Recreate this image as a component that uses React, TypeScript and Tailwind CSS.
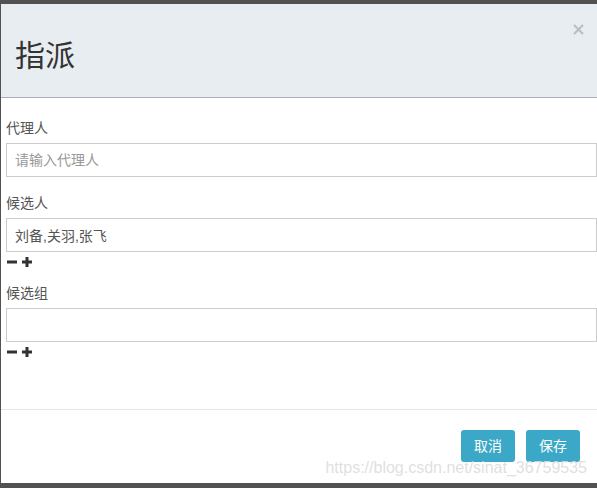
import type { ReactNode } from 'react';

// 指派 dialog — bootstrap-style modal, cropped at the window edges.

const CJK = '"Liberation Sans", "Noto Sans CJK SC", sans-serif';

function MinusPlus(): JSX.Element {
  return (
    <div className="flex h-[18px] items-center gap-[5px] pl-[1px] pt-[1px]">
      <svg width="10" height="10" viewBox="0 0 10 10" aria-hidden>
        <rect x="0" y="3.5" width="10" height="3" fill="#333" />
      </svg>
      <svg width="10" height="10" viewBox="0 0 10 10" aria-hidden>
        <rect x="0" y="3.5" width="10" height="3" fill="#333" />
        <rect x="3.5" y="0" width="3" height="10" fill="#333" />
      </svg>
    </div>
  );
}

function Field({ label, children }: { label: string; children: ReactNode }): JSX.Element {
  return (
    <div>
      <label className="mb-[5px] block h-[20px] text-[14px] leading-[20px] text-[#555]">{label}</label>
      {children}
    </div>
  );
}

function TextBox({ value, placeholder }: { value?: string; placeholder?: string }): JSX.Element {
  return (
    <input
      readOnly
      defaultValue={value}
      placeholder={placeholder}
      className="block h-[34px] w-full border border-[#cccccc] bg-white px-[8px] text-[14px] text-[#555] outline-none placeholder:text-[#999]"
      style={{ fontFamily: CJK }}
    />
  );
}

export default function App(): JSX.Element {
  return (
    <div
      className="relative h-[488px] w-[597px] overflow-hidden bg-[#525252] pl-[1px] pt-[4px]"
      style={{ fontFamily: CJK }}
    >
      <div className="flex h-[479px] w-[596px] flex-col bg-white">
        {/* header */}
        <div className="flex h-[94px] shrink-0 items-start justify-between border-b border-[#a9aeb8] bg-[#e8edf1]">
          <h4 className="pl-[14px] pt-[34px] text-[30px] leading-[36px] text-[#333]">指派</h4>
          <button className="mr-[13px] mt-[20px] p-[0px]">
            <svg width="11" height="11" viewBox="0 0 11 11" aria-hidden>
              <path d="M1 1 L10 10 M10 1 L1 10" stroke="#bcbcbc" strokeWidth="2" />
            </svg>
          </button>
        </div>

        {/* body */}
        <div className="flex flex-1 flex-col pl-[5px] pt-[20px]">
          <Field label="代理人">
            <TextBox placeholder="请输入代理人" />
          </Field>
          <div className="mt-[16px]">
            <Field label="候选人">
              <TextBox value="刘备,关羽,张飞" />
            </Field>
            <MinusPlus />
          </div>
          <div className="mt-[13px]">
            <Field label="候选组">
              <TextBox />
            </Field>
            <MinusPlus />
          </div>
        </div>

        {/* footer */}
        <div className="flex h-[74px] shrink-0 items-start justify-end gap-[11px] border-t border-[#e5e5e5] pr-[17px] pt-[20px]">
          <button className="h-[32px] w-[54px] rounded-[3px] bg-[#3aa8c6] text-[14px] text-white">取消</button>
          <button className="h-[32px] w-[54px] rounded-[3px] bg-[#3aa8c6] text-[14px] text-white">保存</button>
        </div>
      </div>

      {/* csdn watermark */}
      <div
        className="absolute bottom-[11px] right-[10px] text-[16px] leading-[18px] text-[#dcdcdc]/90"
        style={{ fontFamily: '"Liberation Sans", Arial, sans-serif' }}
      >
        https://blog.csdn.net/sinat_36759535
      </div>
    </div>
  );
}
